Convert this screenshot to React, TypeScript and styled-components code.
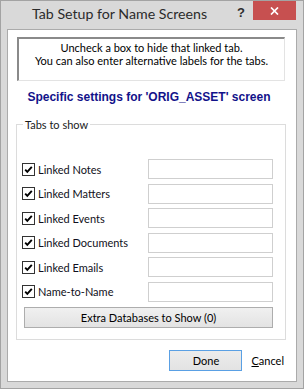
import React from 'react';
import styled, {createGlobalStyle} from "styled-components";

const GlobalStyle = createGlobalStyle`
    html, body {
        margin: 0;
        padding: 0;
        background: #ffffff;
    }
    * {
        box-sizing: border-box;
    }
`

const tabs = [
    "Linked Notes",
    "Linked Matters",
    "Linked Events",
    "Linked Documents",
    "Linked Emails",
    "Name-to-Name",
]

const CheckBox = () => (
    <StyledCheck>
        <svg width="11" height="11" viewBox="0 0 11 11">
            <path d="M2.2 5.6 L4.3 7.8 L8.8 2.8" fill="none" stroke="#000" strokeWidth="1.9"/>
        </svg>
    </StyledCheck>
)

export default function App() {
    return (
        <>
            <GlobalStyle/>
            <Window>
                <TitleBar>
                    <Title>Tab Setup for Name Screens</Title>
                    <HelpButton>?</HelpButton>
                    <CloseButton>
                        <svg width="9" height="8" viewBox="0 0 9 8">
                            <path d="M1 0.5 L8 7.5 M8 0.5 L1 7.5" stroke="#fff" strokeWidth="1.7"/>
                        </svg>
                    </CloseButton>
                </TitleBar>
                <Client>
                    <InfoBox>
                        <div>Uncheck a box to hide that linked tab.</div>
                        <div>You can also enter alternative labels for the tabs.</div>
                    </InfoBox>
                    <Heading>Specific settings for 'ORIG_ASSET' screen</Heading>
                    <Group>
                        <Legend>Tabs to show</Legend>
                        <Rows>
                            {tabs.map(t => (
                                <Row key={t}>
                                    <CheckLabel>
                                        <CheckBox/>
                                        <span>{t}</span>
                                    </CheckLabel>
                                    <TextInput/>
                                </Row>
                            ))}
                        </Rows>
                        <WideButton>Extra Databases to Show (0)</WideButton>
                    </Group>
                    <Footer>
                        <DoneButton>Done</DoneButton>
                        <LinkButton><u>C</u>ancel</LinkButton>
                    </Footer>
                </Client>
            </Window>
        </>
    );
}

const uiFont = `Lato, "Liberation Sans", sans-serif`

const Window = styled.div`
    width: 304px;
    height: 389px;
    border: 1px solid #a3a3a3;
    background: #d9d9d9;
    display: flex;
    flex-direction: column;
    font-family: ${uiFont};
`

const TitleBar = styled.div`
    height: 28px;
    display: flex;
    align-items: flex-start;
    flex-shrink: 0;
`

const Title = styled.div`
    flex: 1;
    padding-left: 31px;
    padding-top: 4px;
    font-size: 14.2px;
    color: #2b2b2b;
`

const HelpButton = styled.div`
    margin-top: 4px;
    margin-right: 8px;
    font-family: "Liberation Sans", sans-serif;
    font-weight: bold;
    font-size: 13px;
    color: #2e2e2e;
`

const CloseButton = styled.div`
    width: 43px;
    height: 19px;
    margin-right: 7px;
    background: #c75050;
    display: flex;
    align-items: center;
    justify-content: center;
`

const Client = styled.div`
    flex: 1;
    margin: 0 6px 6px 6px;
    border: 1px solid #ababab;
    background: #ffffff;
    padding: 7px 10px 0 8px;
    display: flex;
    flex-direction: column;
`

const InfoBox = styled.div`
    height: 44px;
    margin: 0 1px 0 1px;
    border-top: 2px solid #8a8a8a;
    border-left: 2px solid #8a8a8a;
    border-right: 1px solid #e3e3e3;
    border-bottom: 1px solid #e3e3e3;
    padding-top: 2px;
    text-align: center;
    font-size: 11px;
    line-height: 13px;
    color: #000;
`

const Heading = styled.div`
    margin-top: 9px;
    text-align: center;
    font-family: "Liberation Sans", sans-serif;
    font-weight: bold;
    font-size: 12px;
    line-height: 14px;
    color: #12128a;
    padding-right: 4px;
`

const Group = styled.fieldset`
    margin: 14px 0 0 0;
    padding: 28px 12px 11px 5px;
    border: 1px solid #dcdcdc;
    min-width: 0;
`

const Legend = styled.legend`
    padding: 0 2px;
    margin-left: 1px;
    font-size: 11px;
    line-height: 13px;
    color: #1a1a1a;
`

const Rows = styled.div`
    display: flex;
    flex-direction: column;
    gap: 4.6px;
`

const Row = styled.div`
    display: flex;
    align-items: center;
    justify-content: space-between;
    height: 20px;
`

const CheckLabel = styled.label`
    display: flex;
    align-items: center;
    gap: 3px;
    font-size: 11px;
    color: #101020;
`

const StyledCheck = styled.span`
    width: 13px;
    height: 13px;
    border: 1px solid #333333;
    background: #fff;
    display: flex;
    align-items: center;
    justify-content: center;
`

const TextInput = styled.input`
    width: 125px;
    height: 20px;
    border: 1px solid #cfcfcf;
    outline: none;
    font-family: ${uiFont};
`

const WideButton = styled.button`
    display: block;
    width: 249px;
    height: 21px;
    margin: 5px 0 0 2px;
    border: 1px solid #adadad;
    background: linear-gradient(#f0f0f0, #e3e3e3);
    font-family: ${uiFont};
    font-size: 11px;
    color: #000;
    padding: 0;
`

const Footer = styled.div`
    display: flex;
    justify-content: flex-end;
    align-items: center;
    gap: 9px;
    margin-top: 10px;
    padding-right: 2px;
`

const DoneButton = styled.button`
    width: 73px;
    height: 21px;
    border: 1px solid #5aa0e4;
    background: linear-gradient(#ececec, #e3e3e3);
    font-family: ${uiFont};
    font-size: 11px;
    color: #000;
    padding: 0;
`

const LinkButton = styled.span`
    font-size: 11px;
    color: #000;
`
